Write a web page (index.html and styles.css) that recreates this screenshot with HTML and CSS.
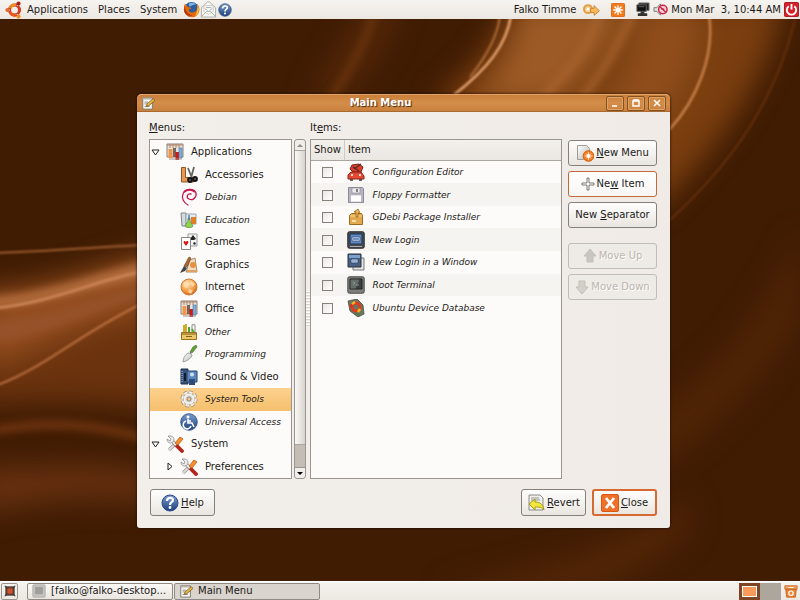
FILE: index.html
```html
<!DOCTYPE html>
<html lang="en">
  <head>
    <meta charset="UTF-8" />
    <meta name="viewport" content="width=device-width, initial-scale=1.0" />
    <title>Main Menu</title>
    <link rel="stylesheet" href="styles.css">
  </head>
  <body>
    <!-- icon set -->
    <svg class="defs" width="0" height="0" aria-hidden="true">
      <defs>
        <linearGradient id="blue" x1="0" y1="0" x2="0" y2="1">
          <stop offset="0" stop-color="#7d9fd0" />
          <stop offset="1" stop-color="#1c3f7c" />
        </linearGradient>
        <linearGradient id="metal" x1="0" y1="0" x2="1" y2="1">
          <stop offset="0" stop-color="#fff" />
          <stop offset="1" stop-color="#b9b9b4" />
        </linearGradient>
        <radialGradient id="globe" cx=".4" cy=".3" r=".8">
          <stop offset="0" stop-color="#ffe3b8" />
          <stop offset=".6" stop-color="#f29a3f" />
          <stop offset="1" stop-color="#c65a10" />
        </radialGradient>
        <symbol id="i-ubuntu" viewBox="0 0 18 18">
          <circle cx="9.500" cy="9" r="5" fill="none" stroke="#d8371c" stroke-width="3" />
          <path d="M5 7a5 5 0 0 1 6-3" fill="none" stroke="#f08a24" stroke-width="3" />
          <path d="M5 11a5 5 0 0 0 6 3" fill="none" stroke="#e9581f" stroke-width="3" />
          <path d="M5 9H2M12 5l2-3M12 13l2 3" stroke="#f0ece7" stroke-width="1.200" />
          <circle cx="2.500" cy="9" r="2.100" fill="#e2682a" />
          <circle cx="13.500" cy="2.500" r="2.100" fill="#a3221a" />
          <circle cx="13.500" cy="15.500" r="2.100" fill="#ee8b22" />
        </symbol>
        <symbol id="i-firefox" viewBox="0 0 18 18">
          <circle cx="9" cy="9" r="8" fill="#2d5c9f" />
          <path d="M6 3c3-2 7-1 8 1-3-1-4 1-7 2z" fill="#78b3e2" />
          <path d="M2 3c-2 5-1 10 3 13 5 3 11 0 12-5 1-3 0-6-2-8 1 4 0 8-4 9-3 1-5-1-5-3l3-1c-1-2-3-1-4-2z" fill="#e66a0c" />
          <path d="M15 4c3 4 2 9-2 12 2-4 3-8 2-12z" fill="#ffcf3a" />
          <path d="M2 5c0 5 3 9 8 10-4 2-9-1-9-6z" fill="#b43a08" />
        </symbol>
        <symbol id="i-mail" viewBox="0 0 18 18">
          <path d="M1.500 7L8 1h2l6.500 6v10h-15z" fill="#f6f6f3" stroke="#aaaaa6" />
          <path d="M4 5h10v6l-5 3-5-3z" fill="#fff" stroke="#c8c8c4" />
          <path d="M2 16l5-5h4l5 5M5 8l3 2M13 8l-3 2M6 7h6" fill="none" stroke="#a8a8a4" />
        </symbol>
        <symbol id="i-help" viewBox="0 0 18 18">
          <circle cx="9" cy="9" r="8" fill="url(#blue)" stroke="#2b4b85" />
          <path d="M6 7c0-4 6-4 6-1 0 2-3 2-3 5" fill="none" stroke="#fff" stroke-width="2.200" />
          <circle cx="9" cy="13.500" r="1.400" fill="#fff" />
        </symbol>
        <symbol id="i-switch" viewBox="0 0 20 16">
          <circle cx="6" cy="7" r="4.500" fill="#f7d49a" stroke="#e3a04a" stroke-width="2.400" />
          <path d="M9 11h4v3l6-5-6-6v3H9z" fill="#f8b95a" stroke="#c77a24" />
          <circle cx="6" cy="7" r="1.500" fill="#fff" />
        </symbol>
        <symbol id="i-update" viewBox="0 0 16 16">
          <rect x=".5" y=".5" width="15" height="15" rx="1" fill="#f47a1c" stroke="#dd620c" />
          <path d="M8 2.500v11M2.500 8h11M4 4l8 8M12 4l-8 8" stroke="#fff" stroke-width="1.600" />
          <circle cx="8" cy="8" r="2.600" fill="#fff" />
        </symbol>
        <symbol id="i-net" viewBox="0 0 16 16">
          <path d="M4 1h11v8H4z" fill="#222" stroke="#777" />
          <path d="M2 3h10v7H2z" fill="#111" stroke="#666" />
          <path d="M6 10h4v2h3v3H3v-3h3z" fill="#333" />
          <path d="M4 5h6" stroke="#666" />
        </symbol>
        <symbol id="i-speaker" viewBox="0 0 16 16">
          <path d="M1 6h3l4-4v12l-4-4H1z" fill="#ddd" stroke="#777" />
          <circle cx="10.500" cy="8" r="4.500" fill="#f8d3da" stroke="#cc2545" stroke-width="1.600" />
          <path d="M7.500 5l6 6M9 8a2 2 0 0 1 3 0" stroke="#cc2545" stroke-width="1.400" fill="none" />
        </symbol>
        <symbol id="i-power" viewBox="0 0 16 16">
          <rect x=".5" y=".5" width="15" height="15" rx="1" fill="#d6202a" stroke="#a8141c" />
          <path d="M5 4.500a5 5 0 1 0 6 0M8 2v6" fill="none" stroke="#fff" stroke-width="2" />
        </symbol>
        <symbol id="i-edit" viewBox="0 0 16 16">
          <path d="M2 2h11v13H2z" fill="#f4f4f0" stroke="#77736a" />
          <path d="M2 2h11v2H2z" fill="#b8b4aa" />
          <path d="M4 7h4M4 9h3M4 12h6" stroke="#888" />
          <path d="M6 12l1-3 7-6 2 2-7 6z" fill="#e9b83e" stroke="#6b4b14" stroke-width=".8" />
        </symbol>
        <symbol id="i-office" viewBox="0 0 18 18">
          <path d="M1 1h16v13H1z" fill="#e9e3dc" stroke="#8b8078" />
          <path d="M1 2h16M4 1v4M7 1v4M10 1v4M13 1v4" stroke="#b08468" />
          <path d="M2.500 6h4v9h-4z" fill="#f0954a" />
          <path d="M7 5h3v9H7z" fill="#6f6660" />
          <path d="M9.500 9h3.500v8H9.500z" fill="#cf1b18" />
          <path d="M13 5h3v10h-3z" fill="#7fb0dc" stroke="#4d76a2" stroke-width=".6" />
          <path d="M3 16h13" stroke="#99948c" />
        </symbol>
        <symbol id="i-accessories" viewBox="0 0 18 18">
          <path d="M1.500 1.500h4v10h8v4.500h-12z" fill="#e59a55" stroke="#935520" />
          <path d="M8 2l4 10M14 1l-3 11" stroke="#666" stroke-width="1.800" />
          <circle cx="10" cy="14" r="2" fill="#555" stroke="#161616" stroke-width="1.800" />
          <circle cx="15" cy="13" r="2" fill="#555" stroke="#161616" stroke-width="1.800" />
        </symbol>
        <symbol id="i-debian" viewBox="0 0 18 18">
          <path d="M8 17C4 15 1 10 3 6c2-6 11-6 13-1 1 5-4 8-7 6-3-1-2-6 2-5" fill="none" stroke="#c9184e" stroke-width="1.300" stroke-linecap="round" />
          <path d="M4 4c3-3 8-3 11 0" fill="none" stroke="#c9184e" stroke-width="1.800" />
        </symbol>
        <symbol id="i-education" viewBox="0 0 18 18">
          <path d="M1 2h5v13H2z" fill="#d4dbdd" stroke="#80898c" />
          <path d="M6 3h10v10H6z" fill="#e6edf2" stroke="#98a5ac" />
          <path d="M11 6h5v7h-5z" fill="#e27d28" />
          <path d="M8 7h2v3l3 5c0 2-8 2-8 0l3-5z" fill="#8fd44c" stroke="#668a53" stroke-width=".8" />
          <path d="M9 4v5" stroke="#4d7fb6" stroke-width="1.500" />
        </symbol>
        <symbol id="i-games" viewBox="0 0 18 18">
          <path d="M8 1h9v12H8z" fill="#f6f6f4" stroke="#999" />
          <path d="M13 2l3 4-2 1h-3l-1-1z" fill="#222" />
          <circle cx="14.500" cy="10.500" r="1.200" fill="#222" />
          <path d="M1.500 4.500h9v12h-9z" fill="#fff" stroke="#888" />
          <path d="M6 13L3.500 9.500c0-2 2-2 2.500-.5.500-1.500 2.500-1.500 2.500.5z" fill="#d8161b" />
        </symbol>
        <symbol id="i-graphics" viewBox="0 0 18 18">
          <path d="M10 4l5-2 2 14H6z" fill="#f2dcc0" stroke="#a98a68" />
          <circle cx="13" cy="9" r="3" fill="#e59245" />
          <path d="M9 1l2 1-4 9-3-1z" fill="#a8672f" stroke="#6b4220" stroke-width=".6" />
          <path d="M4 10l3 2-2 3-5 2z" fill="#3f4448" />
          <path d="M7 15h10" stroke="#e2a162" stroke-width="2" />
        </symbol>
        <symbol id="i-internet" viewBox="0 0 18 18">
          <circle cx="9" cy="9" r="8" fill="url(#globe)" stroke="#cc7a36" />
          <path d="M4 4l4 1 1 3-3 2-3-2zM11 3l4 3-2 3-3-3zM9 11l4 1-2 4-3-2z" fill="#ffe0b0" opacity=".8" />
        </symbol>
        <symbol id="i-other" viewBox="0 0 18 18">
          <path d="M4 2v8M6 1v9" stroke="#c9a514" stroke-width="1.800" />
          <path d="M9 4v6" stroke="#4a9f2d" stroke-width="2" />
          <path d="M12 10V3c0-2 3-2 3 0v7" fill="none" stroke="#aaa" stroke-width="1.400" />
          <path d="M12 6l2 4" stroke="#4fae2e" stroke-width="2" />
          <path d="M1.500 9.500h15v7h-15z" fill="#ecc667" stroke="#9b7320" />
          <path d="M1 11h16M6 13.500h6" stroke="#80601c" />
        </symbol>
        <symbol id="i-programming" viewBox="0 0 18 18">
          <path d="M10 7l3-5 3-2 1 2-5 6z" fill="#5f9f36" stroke="#3d6b21" stroke-width=".6" />
          <path d="M11 7l-1 3" stroke="#777" stroke-width="1.500" />
          <path d="M8 8c2 0 4 1 4 3-2 3-5 5-9 6 0-4 2-7 5-9z" fill="url(#metal)" stroke="#8a8f8a" stroke-width=".8" />
        </symbol>
        <symbol id="i-sound" viewBox="0 0 18 18">
          <path d="M1 1h7v15H1z" fill="#39547c" stroke="#1e2f4a" />
          <path d="M2 3v11" stroke="#a9c1df" stroke-dasharray="1 1" />
          <path d="M7 3h10v11H7z" fill="#5d87bb" stroke="#27456e" />
          <circle cx="12" cy="6.500" r="2" fill="#cfe0f3" />
          <path d="M9 11h6v6H9z" fill="#2d4c77" />
          <path d="M5 5v8" stroke="#101b2c" stroke-width="2" />
        </symbol>
        <symbol id="i-gear" viewBox="0 0 18 18">
          <circle cx="9" cy="9" r="6.800" fill="none" stroke="#8e8a84" stroke-width="3.400" stroke-dasharray="3.340 2" />
          <circle cx="9" cy="9" r="6" fill="#f2f1ee" stroke="#a8a49d" />
          <circle cx="9" cy="9" r="6.800" fill="none" stroke="#f2f1ee" stroke-width="2" stroke-dasharray="3.340 2" />
          <circle cx="9" cy="9" r="3.500" fill="#d9d6d0" />
          <circle cx="9" cy="9" r="2" fill="#f5c888" stroke="#8e8a84" />
        </symbol>
        <symbol id="i-access" viewBox="0 0 18 18">
          <circle cx="9" cy="9" r="8.300" fill="url(#blue)" stroke="#24467f" stroke-width=".8" />
          <circle cx="8" cy="4" r="1.500" fill="#fff" />
          <path d="M8 6v4h4l2 4M6 8a4 4 0 1 0 5 5M8 8h3" fill="none" stroke="#fff" stroke-width="1.600" />
        </symbol>
        <symbol id="i-tools" viewBox="0 0 18 18">
          <path d="M4 14L9 9" stroke="#9a9a98" stroke-width="3.400" stroke-linecap="round" />
          <path d="M3 15L9 9" stroke="#dededc" stroke-width="1.800" stroke-linecap="round" />
          <path d="M9 9l7 7" stroke="#b3241a" stroke-width="3.800" stroke-linecap="round" />
          <path d="M5 5l5 5" stroke="#8f8f8f" stroke-width="3.600" />
          <path d="M5 5l5 5" stroke="#ececea" stroke-width="2.200" />
          <path d="M2 1l3 3-1 2-3-2c0 4 4 5 6 3s1-6-3-6z" fill="#ededeb" stroke="#8a8a8a" stroke-width=".8" />
          <path d="M9 8l5-6 3 2-5 6z" fill="#f58f31" stroke="#bd5d12" stroke-width=".8" />
        </symbol>
        <symbol id="i-config" viewBox="0 0 18 18">
          <path d="M5 2l7-1 4 3-2 5H6L3 6z" fill="#d8402c" stroke="#7e2018" />
          <path d="M7 6l7-5M6 4l6 4" stroke="#5c2a2a" stroke-width="1.500" />
          <path d="M1 12l3-3h10l3 4v3H1z" fill="#e34a34" stroke="#8a2118" />
          <path d="M4 12h2M12 12h2" stroke="#ffd8c8" stroke-width="2" />
          <path d="M3 17h3M12 17h3" stroke="#333" stroke-width="1.600" />
        </symbol>
        <symbol id="i-floppy" viewBox="0 0 18 18">
          <path d="M1.500 1.500h14l1 1v14h-15z" fill="#b9b4c4" stroke="#8d8996" />
          <path d="M5 2h8v5H5z" fill="#ececec" stroke="#8b8b8b" stroke-width=".6" />
          <path d="M10 3v3" stroke="#666" stroke-width="1.600" />
          <path d="M3.500 9h11v7h-11z" fill="#fff" stroke="#a9a6b1" stroke-width=".6" />
        </symbol>
        <symbol id="i-package" viewBox="0 0 18 18">
          <path d="M2.500 7.500l2-2h10l1 2v9h-13z" fill="#e3a94e" stroke="#9a6a1f" />
          <path d="M3 8h12" stroke="#f9d69a" />
          <path d="M9 9V4H7l4-3 2 4-2 0v4z" fill="#f0ba58" stroke="#94641b" stroke-width=".8" />
          <path d="M5 13h4" stroke="#f8dcab" stroke-width="2" />
        </symbol>
        <symbol id="i-login" viewBox="0 0 18 18">
          <rect x=".8" y=".8" width="16.400" height="16.400" rx="1.500" fill="#4b5058" stroke="#1d2024" />
          <path d="M3 3h12v10H3z" fill="#5f8ac4" stroke="#1c2f4d" />
          <path d="M5 6h8v4H5z" fill="#e9f0f8" stroke="#33517d" stroke-width=".8" />
          <path d="M6 8h6" stroke="#4a74ae" stroke-width="1.500" />
          <path d="M3 15.500h12" stroke="#aaa" />
        </symbol>
        <symbol id="i-nested" viewBox="0 0 18 18">
          <path d="M6 5h11v12H6z" fill="#e4e4e0" stroke="#77797c" />
          <path d="M1 1h13v13H1z" fill="#4b5f80" stroke="#2b3340" />
          <path d="M2 2h11v3H2z" fill="#7da1cf" />
          <path d="M4 6h7v4H4z" fill="#e4ecf6" stroke="#2d4a77" />
          <path d="M5 8h5" stroke="#4a74ae" />
        </symbol>
        <symbol id="i-terminal" viewBox="0 0 18 18">
          <rect x=".8" y=".8" width="16.400" height="16.400" rx="1.500" fill="#7c7f7b" stroke="#494b48" />
          <path d="M3 3h12v10H3z" fill="#3b4140" stroke="#222" />
          <path d="M3.500 3.500h9l-4 9h-5z" fill="#656d69" />
          <path d="M6 6l2 1-2 2M9 9h3" stroke="#99a19b" stroke-width=".8" fill="none" />
        </symbol>
        <symbol id="i-task" viewBox="0 0 18 18">
          <rect x="1" y="1" width="16" height="16" rx="1.500" fill="#c4c2be" stroke="#b0ada8" />
          <path d="M4 4h10v9H4z" fill="#9e9e9a" />
        </symbol>
        <symbol id="i-device" viewBox="0 0 18 18">
          <path d="M1 2l9-2 6 6 1 9-6 3-8-6z" fill="#6e7561" stroke="#4d4f45" stroke-width=".8" />
          <circle cx="9" cy="8" r="4" fill="none" stroke="#dd3c1e" stroke-width="2.800" />
          <path d="M5 5l3-2M13 10l-2 3" stroke="#f3b51f" stroke-width="2.600" />
          <circle cx="4" cy="7" r="1.800" fill="#d23820" />
          <path d="M9 15l4 1" stroke="#4a8444" stroke-width="2" />
        </symbol>
        <symbol id="i-newmenu" viewBox="0 0 18 18">
          <path d="M1.500 1.500h9l3 3v11h-12z" fill="url(#metal)" stroke="#9d9d9a" />
          <circle cx="12.500" cy="12" r="5.300" fill="#f47a1c" stroke="#d4600f" />
          <path d="M12.500 8v8M8.500 12h8M10 9.500l5 5M15 9.500l-5 5" stroke="#ffd9b5" />
          <circle cx="12.500" cy="12" r="1.900" fill="#fff" />
        </symbol>
        <symbol id="i-plus" viewBox="0 0 14 14">
          <path d="M6 1h2v5h5v2H8v5H6V8H1V6h5z" fill="#fdfdfc" stroke="#6b6965" stroke-width=".9" />
        </symbol>
        <symbol id="i-up" viewBox="0 0 14 14">
          <path d="M7 0l6 7h-3v6H4V7H1z" fill="#c9c6c1" stroke="#c2beb8" />
        </symbol>
        <symbol id="i-down" viewBox="0 0 14 14">
          <path d="M7 14l6-7h-3V1H4v6H1z" fill="#d3d0cb" stroke="#c2beb8" />
        </symbol>
        <symbol id="i-revert" viewBox="0 0 18 18">
          <path d="M2 1h11l3 3v12H2z" fill="#eeeeea" stroke="#8c8c88" />
          <path d="M4 4h8M4 6h9" stroke="#999" />
          <path d="M2 10l6-5v3c5 0 8 2 9 8-2-3-5-3-9-3v3z" fill="#f1e63c" stroke="#a59a18" />
        </symbol>
        <symbol id="i-close" viewBox="0 0 18 18">
          <rect x=".5" y=".5" width="17" height="17" rx="1.500" fill="#f0702a" stroke="#d9560f" />
          <path d="M5 4l8 10M13 4L5 14" stroke="#fff" stroke-width="2.800" />
        </symbol>
        <symbol id="i-desktop" viewBox="0 0 16 16">
          <path d="M3 3h10v10H3z" fill="#5a3a30" stroke="#6f6a64" />
          <path d="M5 5h6v6H5z" fill="#d0522d" />
          <path d="M2 2l3 3M14 2l-3 3M2 14l3-3M14 14l-3-3" stroke="#333" stroke-width="1.200" />
        </symbol>
        <symbol id="i-trash" viewBox="0 0 16 16">
          <path d="M1 2h14v4H1z" fill="#f3a15c" stroke="#c96a22" />
          <path d="M2 6h12l-1 9H3z" fill="#ee8335" stroke="#c4611c" />
          <circle cx="8" cy="10.500" r="2.500" fill="none" stroke="#fff" stroke-width="1.400" />
          <path d="M5 4h6" stroke="#fff" />
        </symbol>
      </defs>
    </svg>

    <header class="panel panel-top">
      <nav class="menubar">
        <svg class="icon"><use href="#i-ubuntu" /></svg>
        <button type="button">Applications</button>
        <button type="button">Places</button>
        <button type="button">System</button>
      </nav>
      <div class="launchers">
        <button type="button" aria-label="Firefox"><svg class="icon"><use href="#i-firefox" /></svg></button>
        <button type="button" aria-label="Mail"><svg class="icon"><use href="#i-mail" /></svg></button>
        <button type="button" aria-label="Help"><svg class="icon icon-small"><use href="#i-help" /></svg></button>
      </div>
      <div class="tray">
        <button type="button" class="user">Falko Timme <svg class="icon icon-wide"><use href="#i-switch" /></svg></button>
        <svg class="icon icon-small"><use href="#i-update" /></svg>
        <div class="clock">
          <svg class="icon"><use href="#i-net" /></svg>
          <svg class="icon"><use href="#i-speaker" /></svg>
          <time>Mon Mar  3, 10:44 AM</time>
          <button type="button" aria-label="Quit"><svg class="icon"><use href="#i-power" /></svg></button>
        </div>
      </div>
    </header>

    <main class="desktop">
      <svg class="wallpaper" viewBox="0 19 800 562" preserveAspectRatio="none" aria-hidden="true">
        <defs>
          <filter id="soft" x="-30%" y="-30%" width="160%" height="160%" color-interpolation-filters="sRGB"><feGaussianBlur stdDeviation="14" /></filter>
          <filter id="mid" x="-30%" y="-30%" width="160%" height="160%" color-interpolation-filters="sRGB"><feGaussianBlur stdDeviation="4" /></filter>
          <filter id="fine" x="-30%" y="-30%" width="160%" height="160%" color-interpolation-filters="sRGB"><feGaussianBlur stdDeviation="1" /></filter>
        </defs>
        <rect y="19" width="800" height="562" fill="#401c03" />
        <g filter="url(#soft)">
          <path d="M510 0h275c-20 90-70 150-130 210l-220-110c40-30 65-60 75-100z" fill="#7a3e0f" />
          <path d="M520 0h110c-10 40-40 70-70 100h-90c30-20 45-60 50-100z" fill="#9c5a26" />
          <path d="M640 0h60c5 60-20 100-50 130h-60c30-40 50-80 50-130z" fill="#8f4d1b" />
          <path d="M370 0h30c-10 40-30 70-60 100h-30z" fill="#552809" />
          <path d="M800 230c-40 90-80 140-160 190v60c80-50 130-110 160-160z" fill="#4f2406" />
          <path d="M-20 290c60 0 110-20 180-40v60c-40 20-90 60-180 85z" fill="#944d1e" />
          <path d="M-20 370c60-20 110-50 180-60v100c-60-10-120-10-180-5z" fill="#6b330e" />
          <path d="M-20 465c60 5 110-10 180 10v30c-60-10-120-5-180 10z" fill="#663010" />
          <path d="M440 590c80-20 150-30 250-90v30c-40 40-90 60-120 70z" fill="#522507" />
        </g>
        <g filter="url(#mid)">
          <path d="M-10 297c50-2 100-22 160-37v18c-50 6-100 28-160 30z" fill="#b26c3c" />
          <path d="M-10 322c60-5 100-22 160-38v10c-50 14-90 38-160 50z" fill="#96522a" />
          <path d="M600 10c-10 40-35 65-60 90M635 10c-20 40-30 60-55 90" stroke="#a9652f" stroke-width="6" fill="none" />
          <path d="M375 10c-10 35-25 60-45 90" stroke="#74390f" stroke-width="5" fill="none" />
          <path d="M-5 430c50-8 90-8 150 8" stroke="#743711" stroke-width="8" fill="none" />
        </g>
        <g filter="url(#fine)" fill="none">
          <path d="M511 15c-4 30-24 54-57 80" stroke="#e9a571" stroke-width="2.500" />
          <path d="M500 15c-2 22-14 42-30 62" stroke="#b4703a" stroke-width="2" />
          <path d="M709 15c6 40-12 85-40 115" stroke="#c8804a" stroke-width="2.500" />
          <path d="M-5 253c60-2 100-6 150-8" stroke="#a05d30" stroke-width="2" />
          <path d="M-5 308c60-6 100-28 150-37" stroke="#c98253" stroke-width="3" />
          <path d="M-5 386c50-18 80-50 150-84" stroke="#bd7140" stroke-width="2" />
          <path d="M795 20c-20 80-60 140-125 200" stroke="#64300c" stroke-width="2" />
        </g>
      </svg>

      <section class="window" aria-labelledby="window-title">
        <div class="titlebar">
          <svg class="icon icon-small"><use href="#i-edit" /></svg>
          <h1 id="window-title">Main Menu</h1>
          <div class="controls">
            <button type="button" aria-label="Minimize"><svg viewBox="0 0 10 10"><path d="M2 8h5" /></svg></button>
            <button type="button" aria-label="Maximize"><svg viewBox="0 0 10 10"><path d="M2 3h6v5H2zM2 2h6" /></svg></button>
            <button type="button" aria-label="Close window"><svg viewBox="0 0 10 10"><path d="M2 2l6 6M8 2L2 8" /></svg></button>
          </div>
        </div>

        <div class="content">
          <div class="panes">
            <h2 class="menus-label" id="menus-label"><u>M</u>enus:</h2>
            <h2 class="items-label" id="items-label">It<u>e</u>ms:</h2>

            <ul class="tree" role="tree" aria-labelledby="menus-label">
              <li role="treeitem"><svg class="arrow"><path d="M1 2h7l-3.500 5z" /></svg><svg class="icon"><use href="#i-office" /></svg>Applications</li>
              <li role="treeitem" class="child"><svg class="icon"><use href="#i-accessories" /></svg>Accessories</li>
              <li role="treeitem" class="child unused"><svg class="icon"><use href="#i-debian" /></svg>Debian</li>
              <li role="treeitem" class="child unused"><svg class="icon"><use href="#i-education" /></svg>Education</li>
              <li role="treeitem" class="child"><svg class="icon"><use href="#i-games" /></svg>Games</li>
              <li role="treeitem" class="child"><svg class="icon"><use href="#i-graphics" /></svg>Graphics</li>
              <li role="treeitem" class="child"><svg class="icon"><use href="#i-internet" /></svg>Internet</li>
              <li role="treeitem" class="child"><svg class="icon"><use href="#i-office" /></svg>Office</li>
              <li role="treeitem" class="child unused"><svg class="icon"><use href="#i-other" /></svg>Other</li>
              <li role="treeitem" class="child unused"><svg class="icon"><use href="#i-programming" /></svg>Programming</li>
              <li role="treeitem" class="child"><svg class="icon"><use href="#i-sound" /></svg>Sound &amp; Video</li>
              <li role="treeitem" class="child unused selected" aria-selected="true"><svg class="icon"><use href="#i-gear" /></svg>System Tools</li>
              <li role="treeitem" class="child unused"><svg class="icon"><use href="#i-access" /></svg>Universal Access</li>
              <li role="treeitem"><svg class="arrow"><path d="M1 2h7l-3.500 5z" /></svg><svg class="icon"><use href="#i-tools" /></svg>System</li>
              <li role="treeitem" class="closed"><svg class="arrow"><path d="M3 1v7l4-3.500z" /></svg><svg class="icon"><use href="#i-tools" /></svg>Preferences</li>
            </ul>

            <div class="scrollbar">
              <button type="button" aria-label="Scroll up" disabled><svg viewBox="0 0 8 8"><path d="M1 6l3-3 3 3z" /></svg></button>
              <div class="thumb"></div>
              <div class="trough"></div>
              <button type="button" aria-label="Scroll down"><svg viewBox="0 0 8 8"><path d="M1 3l3 3 3-3z" /></svg></button>
            </div>

            <div class="handle"></div>

            <div class="list">
              <table aria-labelledby="items-label">
                <thead>
                  <tr><th class="show">Show</th><th>Item</th></tr>
                </thead>
                <tbody>
                  <tr><td class="show"><input type="checkbox" id="item1"></td><td><label for="item1"><svg class="icon"><use href="#i-config" /></svg>Configuration Editor</label></td></tr>
                  <tr><td class="show"><input type="checkbox" id="item2"></td><td><label for="item2"><svg class="icon"><use href="#i-floppy" /></svg>Floppy Formatter</label></td></tr>
                  <tr><td class="show"><input type="checkbox" id="item3"></td><td><label for="item3"><svg class="icon"><use href="#i-package" /></svg>GDebi Package Installer</label></td></tr>
                  <tr><td class="show"><input type="checkbox" id="item4"></td><td><label for="item4"><svg class="icon"><use href="#i-login" /></svg>New Login</label></td></tr>
                  <tr><td class="show"><input type="checkbox" id="item5"></td><td><label for="item5"><svg class="icon"><use href="#i-nested" /></svg>New Login in a Window</label></td></tr>
                  <tr><td class="show"><input type="checkbox" id="item6"></td><td><label for="item6"><svg class="icon"><use href="#i-terminal" /></svg>Root Terminal</label></td></tr>
                  <tr><td class="show"><input type="checkbox" id="item7"></td><td><label for="item7"><svg class="icon"><use href="#i-device" /></svg>Ubuntu Device Database</label></td></tr>
                </tbody>
              </table>
            </div>

            <div class="actions">
              <button type="button" class="btn"><svg class="icon"><use href="#i-newmenu" /></svg><span><u>N</u>ew Menu</span></button>
              <button type="button" class="btn hot"><svg class="icon icon-small"><use href="#i-plus" /></svg><span>Ne<u>w</u> Item</span></button>
              <button type="button" class="btn"><span>New <u>S</u>eparator</span></button>
              <button type="button" class="btn move" disabled><svg class="icon icon-small"><use href="#i-up" /></svg><span>Move Up</span></button>
              <button type="button" class="btn" disabled><svg class="icon icon-small"><use href="#i-down" /></svg><span>Move Down</span></button>
            </div>
          </div>

          <div class="footer">
            <button type="button" class="btn help"><svg class="icon"><use href="#i-help" /></svg><span><u>H</u>elp</span></button>
            <button type="button" class="btn"><svg class="icon"><use href="#i-revert" /></svg><span><u>R</u>evert</span></button>
            <button type="button" class="btn focused"><svg class="icon"><use href="#i-close" /></svg><span><u>C</u>lose</span></button>
          </div>
        </div>
      </section>
    </main>

    <footer class="panel panel-bottom">
      <button type="button" class="show-desktop" aria-label="Show desktop"><svg class="icon icon-small"><use href="#i-desktop" /></svg></button>
      <button type="button" class="task"><svg class="icon icon-small"><use href="#i-task" /></svg>[falko@falko-desktop...</button>
      <button type="button" class="task active"><svg class="icon icon-small"><use href="#i-edit" /></svg>Main Menu</button>
      <div class="workspaces">
        <button type="button" class="current" aria-label="Workspace 1"></button>
        <button type="button" aria-label="Workspace 2"></button>
      </div>
      <button type="button" aria-label="Trash"><svg class="icon icon-small"><use href="#i-trash" /></svg></button>
    </footer>
  </body>
</html>
```

FILE: styles.css
```css
* {
  box-sizing: border-box;
}
body {
  display: flex;
  flex-direction: column;
  min-height: 100vh;
  margin: 0;
  font-family: "DejaVu Sans", sans-serif;
  font-size: 10px;
  line-height: 16px;
  color: #1c1a18;
  background: #401c03;
}
button {
  display: flex;
  align-items: center;
  padding: 0;
  border: 0;
  background: none;
  font: inherit;
  color: inherit;
  white-space: nowrap;
}
h1,
h2 {
  margin: 0;
  font-size: 10px;
}
.defs {
  position: absolute;
}
.icon {
  flex: none;
  width: 18px;
  height: 18px;
}
.icon-small {
  width: 14px;
  height: 14px;
}
.icon-wide {
  width: 19px;
  height: 14px;
}

/* panels */
.panel {
  display: flex;
  align-items: center;
  height: 19px;
  background: linear-gradient(#f6f4f0, #ece7e1);
}
.panel-top {
  padding: 0 1px 0 5px;
}
.menubar {
  display: flex;
  align-items: center;
  gap: 10px;
}
.menubar .icon {
  margin-right: -6px;
}
.launchers {
  display: flex;
  align-items: center;
  margin-left: 6px;
}
.launchers .icon {
  width: 17px;
  height: 17px;
}
.launchers .icon-small {
  width: 14px;
  height: 14px;
  margin-left: 1px;
}
.tray {
  display: flex;
  align-items: center;
  gap: 10px;
  margin-left: auto;
}
.user {
  gap: 6px;
}
.clock {
  display: flex;
  align-items: center;
  gap: 3px;
  white-space: nowrap;
}
.clock time {
  white-space: pre;
}
.clock .icon {
  width: 15px;
  height: 15px;
}
.panel-bottom {
  padding: 0 2px 0 1px;
  border-top: 1px solid #fff;
}
.show-desktop {
  justify-content: center;
  width: 17px;
  height: 17px;
  margin-right: 9px;
  border: 1px solid #9b958d;
  border-radius: 2px;
}
.task {
  gap: 5px;
  width: 146px;
  height: 17px;
  margin-right: 1px;
  padding: 0 4px;
  border: 1px solid #8f8a83;
  border-radius: 2px;
  background: linear-gradient(#fbfaf8, #e9e5df);
}
.task.active {
  background: #d9d4cd;
}
.workspaces {
  display: flex;
  margin: 0 3px 0 auto;
}
.workspaces button {
  width: 21px;
  height: 17px;
  background: #aca69d;
}
.workspaces .current {
  border: 3px solid #7d4523;
  background: #f79a5c;
  box-shadow: inset 0 0 0 1px #fff;
}

/* desktop */
.desktop {
  position: relative;
  flex: 1;
  overflow: hidden;
}
.wallpaper {
  position: absolute;
  width: 100%;
  height: 100%;
}
.window {
  position: absolute;
  inset: 75px 130px 53px 137px;
  display: flex;
  flex-direction: column;
  border-radius: 5px 5px 3px 3px;
  background: linear-gradient(90deg, #f2eeea, #f0ebe6);
  box-shadow: 0 0 2px 1px rgba(30, 10, 0, 0.5);
}
.titlebar {
  display: flex;
  align-items: center;
  height: 18px;
  padding: 0 4px;
  border-top: 1px solid #e2a469;
  border-bottom: 1px solid #a9692f;
  border-radius: 5px 5px 0 0;
  background: linear-gradient(#c87f3b, #d48e49 50%, #c9813d);
}
.titlebar h1 {
  flex: 1;
  text-align: center;
  color: #fff;
  text-shadow: 1px 1px 1px #4c2c10;
}
.controls {
  display: flex;
  gap: 3px;
}
.controls button {
  justify-content: center;
  width: 18px;
  height: 15px;
  border: 1px solid #87501f;
  border-radius: 2px;
  box-shadow: inset 0 0 0 1px #dda265;
}
.controls svg {
  width: 10px;
  height: 10px;
  fill: none;
  stroke: #fff;
  stroke-width: 1.5;
}
.content {
  flex: 1;
  display: flex;
  flex-direction: column;
  gap: 10px;
  padding: 8px 13px 12px 12px;
}
.panes {
  flex: 1;
  display: grid;
  grid-template-columns: 143px 14px 4px 1fr 95px;
  grid-template-rows: 19px 1fr;
}
.panes h2 {
  font-weight: normal;
}
.menus-label {
  grid-column: 1;
}
.items-label {
  grid-column: 4;
}
.tree {
  grid-column: 1;
  display: grid;
  grid-auto-rows: 1fr;
  margin: 0;
  padding: 1px 0 0;
  list-style: none;
  border: 1px solid #9a958e;
  background: #fcfbf9;
}
.tree li {
  display: flex;
  align-items: center;
  gap: 7px;
  padding-left: 1px;
  white-space: nowrap;
}
.tree .child {
  padding-left: 30px;
}
.tree .closed {
  padding-left: 15px;
}
.tree .unused {
  font-size: 9px;
  font-style: italic;
}
.tree .selected {
  background: linear-gradient(#fdd18d, #f5bf6d);
}
.arrow {
  width: 10px;
  height: 9px;
  fill: #fff;
  stroke: #222;
}
.tree .arrow + .icon {
  margin-left: -2px;
}
.scrollbar {
  display: flex;
  flex-direction: column;
  margin-left: 2px;
  border: 1px solid #9a958e;
  border-radius: 3px;
  background: #f1ede8;
}
.scrollbar button {
  justify-content: center;
  height: 10px;
}
.scrollbar svg {
  width: 8px;
  height: 8px;
}
.scrollbar button:disabled {
  opacity: 0.4;
}
.thumb {
  flex: 1;
  border: 1px solid #aaa59e;
  border-width: 1px 0;
  background: linear-gradient(90deg, #faf9f7, #d8d3cc);
}
.trough {
  height: 23px;
  border-bottom: 1px solid #9a958e;
  background: #c3bdb5;
}
.handle {
  align-self: center;
  height: 36px;
  background: repeating-linear-gradient(#fff 0 1px, #d8d3cd 1px 2px, transparent 2px 3px);
}
.list {
  border: 1px solid #9a958e;
  background: #fcfbf9;
}
table {
  width: 100%;
  height: 179px;
  border-collapse: collapse;
}
th {
  height: 20px;
  padding: 0 3px;
  border-bottom: 1px solid #aaa59e;
  background: linear-gradient(#f3f0ec, #eae6e0);
  font-weight: normal;
  text-align: left;
}
th.show {
  border-right: 1px solid #d0cbc4;
}
td {
  padding: 0 3px;
}
.show {
  width: 33px;
}
td.show {
  text-align: center;
}
tbody tr:nth-child(even) {
  background: #f6f4f0;
}
label {
  display: flex;
  align-items: center;
  gap: 7px;
  font-size: 9px;
  font-style: italic;
}
input[type="checkbox"] {
  appearance: none;
  display: block;
  width: 11px;
  height: 11px;
  margin: 1px auto 0;
  border: 1px solid #85807a;
  background: linear-gradient(135deg, #e9e7e3, #fff);
}
input[type="checkbox"]:checked {
  background: #f0a04a;
}
.actions {
  display: flex;
  flex-direction: column;
  gap: 5px;
  padding: 1px 0 0 6px;
}
.btn {
  justify-content: center;
  gap: 2px;
  height: 26px;
  border: 1px solid #85807a;
  border-radius: 3px;
  background: linear-gradient(#fefefd, #f4f2ef 50%, #e9e5e0);
}
.btn:disabled {
  border-color: #c1bcb5;
  background: #eeeae5;
  color: #bbb6af;
  text-shadow: 1px 1px 0 #fff;
}
.btn.hot {
  border-color: #c2693c;
  background: linear-gradient(#fff, #f8f6f4);
}
.btn.move {
  margin-top: 10px;
}
.actions .btn {
  flex: none;
}
.footer {
  display: flex;
  gap: 6px;
}
.footer .btn {
  width: 65px;
  height: 27px;
}
.footer .help {
  margin: 0 auto 0 1px;
}
.btn.focused {
  border: 2px solid #d76a31;
}
```
